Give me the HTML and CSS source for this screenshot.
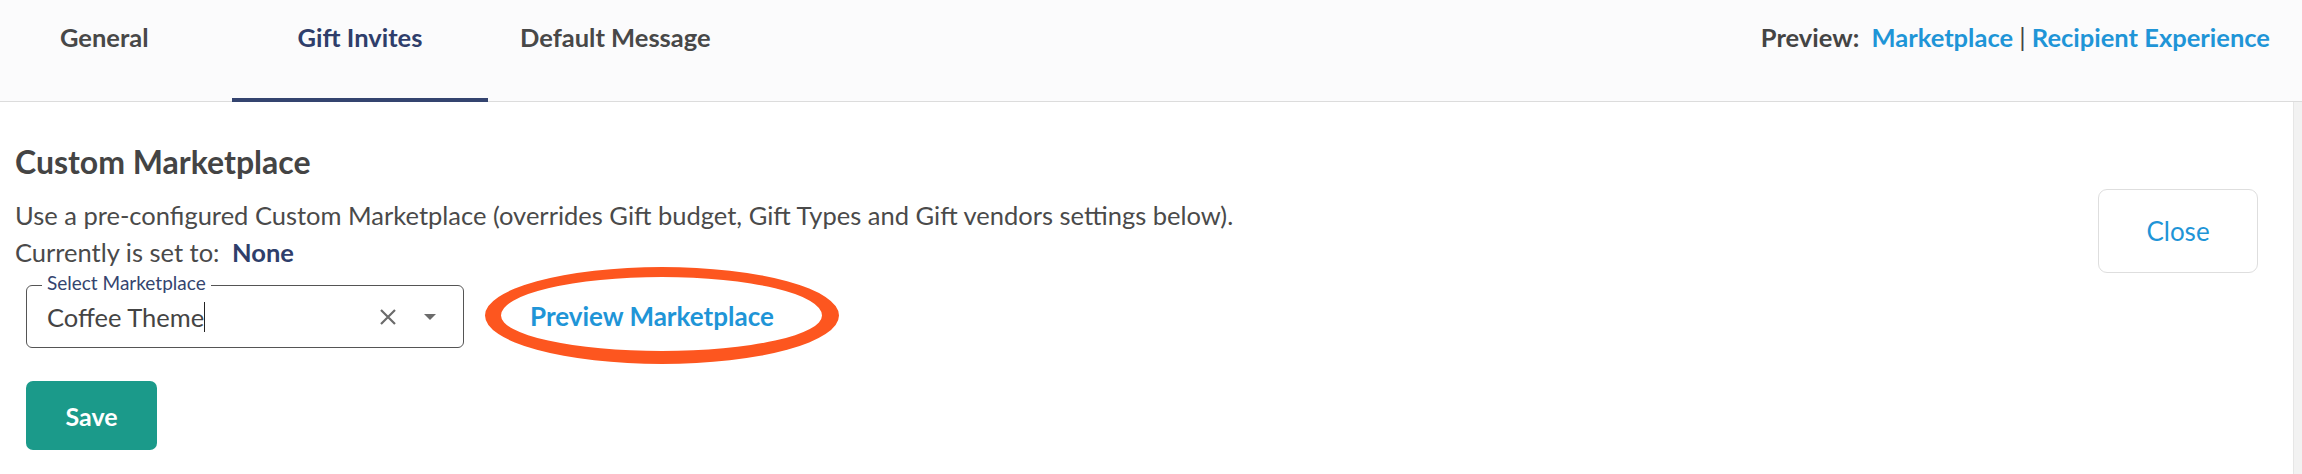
FILE: index.html
```html
<!DOCTYPE html>
<html>
<head>
  <title>Gift Invites</title>
  <link rel="stylesheet" href="styles.css">
</head>
<body>
  <div class="header">
    <div class="tabs">
      <div class="tab tab-first">General</div>
      <div class="tab tab-active">Gift Invites</div>
      <div class="tab tab-last">Default Message</div>
    </div>
    <div class="preview">
      <span class="preview-label">Preview:</span>
      <a class="link">Marketplace</a>
      <span class="divider">|</span>
      <a class="link">Recipient Experience</a>
    </div>
  </div>

  <div class="page">
    <div class="content">
      <div class="section">
        <h2>Custom Marketplace</h2>
        <p class="desc">Use a pre-configured Custom Marketplace (overrides Gift budget, Gift Types and Gift vendors settings below).</p>
        <p class="current">Currently is set to: <span class="current-value">None</span></p>

        <div class="select-row">
          <div class="select-field">
            <span class="select-label">Select Marketplace</span>
            <span class="select-value">Coffee Theme</span><span class="caret"></span>
            <div class="select-icons">
              <svg class="clear-icon" width="18" height="18" viewBox="0 0 18 18">
                <path d="M2 2 L16 16 M16 2 L2 16" stroke="#6b6b6b" stroke-width="2.2" fill="none"/>
              </svg>
              <svg class="arrow-icon" width="14" height="8" viewBox="0 0 14 8">
                <path d="M1 1 L13 1 L7 7 Z" fill="#6b6b6b"/>
              </svg>
            </div>
          </div>
          <a class="link preview-link">Preview Marketplace<span class="ring"></span></a>
        </div>

        <button class="save-btn">Save</button>
      </div>
      <button class="close-btn">Close</button>
    </div>
    <div class="scroll-strip"></div>
  </div>
</body>
</html>
```

FILE: styles.css
```css
body {
  margin: 0;
  font-family: Lato, "Open Sans", sans-serif;
  color: #4a4a4a;
  background-color: #fff;
}

.header {
  display: flex;
  justify-content: space-between;
  height: 101px;
  background-color: #fbfbfc;
  border-bottom: 1px solid #dcdcdc;
}

.tabs {
  display: flex;
  align-items: stretch;
}

.tab {
  font-size: 25.5px;
  font-weight: bold;
  color: #484848;
  padding-top: 22px;
  box-sizing: border-box;
}

.tab-first {
  padding-left: 60px;
  width: 232px;
}

.tab-active {
  width: 256px;
  text-align: center;
  color: #2f3e6b;
  border-bottom: 4px solid #34446f;
  margin-bottom: -1px;
}

.tab-last {
  padding-left: 32px;
}

.preview {
  font-size: 25.5px;
  font-weight: bold;
  padding-top: 22px;
  padding-right: 32px;
}

.preview-label {
  color: #444;
  margin-right: 6px;
}

.divider {
  color: #444;
  font-weight: normal;
}

.link {
  color: #1f95d7;
  font-weight: bold;
  cursor: pointer;
}

.page {
  display: flex;
}

.content {
  flex: 1;
  display: flex;
  justify-content: space-between;
  align-items: flex-start;
  padding: 42px 35px 0 15px;
}

.section h2 {
  margin: 0;
  font-size: 32px;
  line-height: 36px;
  color: #444;
}

.desc {
  margin: 17px 0 0 0;
  font-size: 25.5px;
  line-height: 37px;
}

.current {
  margin: 0;
  font-size: 25.5px;
  line-height: 37px;
}

.current-value {
  color: #2f3e6b;
  font-weight: bold;
  margin-left: 6px;
}

.select-row {
  display: flex;
  align-items: center;
  margin-top: 14px;
  margin-left: 11px;
}

.select-field {
  position: relative;
  display: flex;
  align-items: center;
  width: 438px;
  height: 63px;
  box-sizing: border-box;
  border: 1px solid #555;
  border-radius: 6px;
  padding-left: 20px;
}

.select-label {
  position: absolute;
  top: -14px;
  left: 15px;
  padding: 0 5px;
  background-color: #fff;
  font-size: 19px;
  line-height: 22px;
  color: #34446f;
}

.select-value {
  font-size: 25.5px;
  color: #444;
}

.caret {
  display: inline-block;
  width: 1px;
  height: 30px;
  background-color: #222;
}

.select-icons {
  margin-left: auto;
  display: flex;
  align-items: center;
  gap: 26px;
  padding-right: 26px;
}

.preview-link {
  position: relative;
  margin-left: 66px;
  font-size: 26px;
  line-height: 31px;
}

/* hand-drawn highlight round the link */
.ring {
  position: absolute;
  left: -45px;
  top: -34px;
  width: 354px;
  height: 97px;
  box-sizing: border-box;
  border-style: solid;
  border-color: #fd561f;
  border-width: 10px 17px 13px 16px;
  border-radius: 50%;
}

.save-btn {
  display: block;
  margin-top: 33px;
  margin-left: 11px;
  width: 131px;
  height: 69px;
  border: none;
  border-radius: 7px;
  background-color: #1b9a8a;
  color: #fff;
  font-family: Lato, sans-serif;
  font-size: 25px;
  font-weight: bold;
}

.close-btn {
  margin-top: 45px;
  width: 160px;
  height: 84px;
  background-color: #fff;
  border: 1px solid #dedede;
  border-radius: 9px;
  color: #1f95d7;
  font-family: Lato, sans-serif;
  font-size: 26px;
}

.scroll-strip {
  width: 8px;
  height: 372px;
  background-color: #f2f2f2;
  border-left: 1px solid #e6e6e6;
}
```
